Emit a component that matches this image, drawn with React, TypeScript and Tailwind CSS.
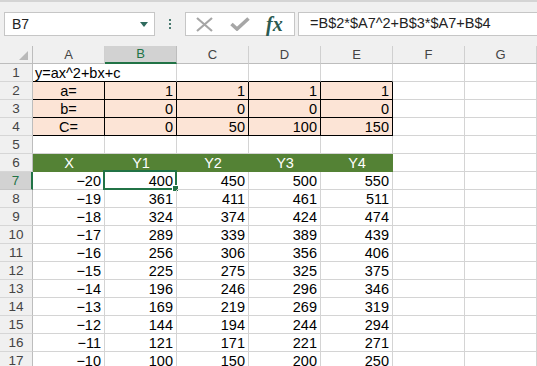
import React from 'react';

const cols = ['A', 'B', 'C', 'D', 'E', 'F', 'G'];

// x values -20..-10 with y = x^2 + c for c = 0, 50, 100, 150
const dataRows = Array.from({ length: 11 }, (_, i) => {
  const x = -20 + i;
  return [x, x * x, x * x + 50, x * x + 100, x * x + 150];
});

const fmt = (n: number) => (n < 0 ? `\u2212${Math.abs(n)}` : `${n}`);

const RowHead = ({ n, active }: { n: number; active?: boolean }) => (
  <div
    className={`h-[18px] border-b border-r flex items-center justify-center pt-[2px] text-[13.5px] ${
      active
        ? 'bg-[#d2d2d2] text-[#217346] border-b-[#c6c6c6] border-r-2 border-r-[#217346]'
        : 'bg-[#f0f0f0] text-[#444] border-b-[#d6d6d6] border-r-[#bdbdbd]'
    }`}
  >
    {n}
  </div>
);

const Cell = ({
  children,
  className = '',
}: {
  children?: React.ReactNode;
  className?: string;
}) => (
  <div className={`relative h-[18px] flex items-center pt-[2px] whitespace-nowrap text-[14.5px] ${className}`}>
    {children}
  </div>
);

export default function App() {
  return (
    <div className="w-[537px] h-[366px] overflow-hidden bg-white font-['Liberation_Sans',Arial,sans-serif] text-black">
      {/* formula bar */}
      <div className="h-[46px] bg-[#f0f0f0] border-t-2 border-[#d4d4d4] flex items-start pt-[10px]">
        <div className="ml-[4px] w-[151px] h-[24px] border border-[#c6c6c6] bg-white flex items-center justify-between pl-[7px] pr-[6px] text-[14px] text-[#222]">
          <span>B7</span>
          <svg width="8" height="5" viewBox="0 0 8 5">
            <polygon points="0,0 8,0 4,5" fill="#2f6b5e" />
          </svg>
        </div>
        <div className="w-[30px] h-[24px] flex flex-col items-center justify-center gap-[2px]">
          <span className="w-[2px] h-[2px] bg-[#4a7a70]" />
          <span className="w-[2px] h-[2px] bg-[#4a7a70]" />
          <span className="w-[2px] h-[2px] bg-[#4a7a70]" />
        </div>
        <div className="w-[110px] h-[24px] border border-[#c6c6c6] bg-white flex items-center pl-[10px]">
          <svg width="17" height="15" viewBox="0 0 17 15">
            <path d="M1 1 L16 14 M16 1 L1 14" stroke="#a6a6a6" strokeWidth="2.2" fill="none" />
          </svg>
          <svg width="20" height="14" viewBox="0 0 20 14" className="ml-[17px]">
            <path d="M1.5 7 L7 12 L18.5 1.5" stroke="#a6a6a6" strokeWidth="3.6" fill="none" />
          </svg>
          <span className="ml-[16px] italic font-semibold font-['Liberation_Serif',serif] text-[20px] leading-none text-[#2b5a50]">
            fx
          </span>
        </div>
        <div className="ml-[3px] flex-1 h-[24px] border border-r-0 border-[#c6c6c6] bg-white flex items-center pl-[11px] text-[14.5px] text-[#222]">
          =B$2*$A7^2+B$3*$A7+B$4
        </div>
      </div>

      {/* sheet */}
      <div className="grid grid-cols-[33px_repeat(7,72px)]">
        {/* column headers */}
        <div className="relative h-[18px] bg-[#f0f0f0] border-r border-b border-[#bdbdbd]">
          <svg width="9" height="9" viewBox="0 0 9 9" className="absolute right-[4px] bottom-[3px]">
            <polygon points="9,0 9,9 0,9" fill="#b9b9b9" />
          </svg>
        </div>
        {cols.map((c) => (
          <div
            key={c}
            className={`h-[18px] flex items-center justify-center text-[13px] border-r ${
              c === 'B'
                ? 'bg-[#d2d2d2] text-[#217346] border-r-[#bdbdbd] border-b-2 border-b-[#217346]'
                : 'bg-[#f0f0f0] text-[#444] border-r-[#d0d0d0] border-b border-b-[#bdbdbd]'
            }`}
          >
            {c}
          </div>
        ))}

        {/* row 1 */}
        <RowHead n={1} />
        <Cell className="pl-[2px] border-b border-black z-10">y=ax^2+bx+c</Cell>
        <Cell className="border-b border-r border-b-black border-r-[#d4d4d4]" />
        <Cell className="border-b border-r border-b-black border-r-[#d4d4d4]" />
        <Cell className="border-b border-r border-b-black border-r-[#d4d4d4]" />
        <Cell className="border-b border-r border-b-black border-r-[#d4d4d4]" />
        <Cell className="border-b border-r border-[#d4d4d4]" />
        <Cell className="border-b border-r border-[#d4d4d4]" />

        {/* rows 2-4 : coefficients */}
        {[
          ['a=', 1, 1, 1, 1],
          ['b=', 0, 0, 0, 0],
          ['C=', 0, 50, 100, 150],
        ].map((r, i) => (
          <React.Fragment key={i}>
            <RowHead n={i + 2} />
            <Cell className="justify-center bg-[#fce4d6] border-r border-b border-black">{r[0]}</Cell>
            {r.slice(1).map((v, j) => (
              <Cell key={j} className="justify-end pr-[3px] bg-[#fce4d6] border-r border-b border-black">
                {v}
              </Cell>
            ))}
            <Cell className="border-b border-r border-[#d4d4d4]" />
            <Cell className="border-b border-r border-[#d4d4d4]" />
          </React.Fragment>
        ))}

        {/* row 5 */}
        <RowHead n={5} />
        {cols.map((c) => (
          <Cell key={c} className="border-b border-r border-[#d4d4d4]" />
        ))}

        {/* row 6 : table header */}
        <RowHead n={6} />
        {['X', 'Y1', 'Y2', 'Y3', 'Y4'].map((h) => (
          <Cell key={h} className="justify-center bg-[#548235] text-white border-b border-[#548235]">
            {h}
          </Cell>
        ))}
        <Cell className="border-b border-r border-[#d4d4d4]" />
        <Cell className="border-b border-r border-[#d4d4d4]" />

        {/* rows 7-17 : data */}
        {dataRows.map((r, i) => (
          <React.Fragment key={i}>
            <RowHead n={i + 7} active={i === 0} />
            {r.map((v, j) => (
              <Cell key={j} className="justify-end pr-[3px] border-b border-r border-[#d4d4d4]">
                {fmt(v)}
                {i === 0 && j === 1 && (
                  <>
                    <span className="absolute -left-[2px] -top-[2px] -right-px -bottom-px border-2 border-[#217346]" />
                    <span className="absolute -right-[3px] -bottom-[3px] w-[7px] h-[7px] bg-[#217346] border border-white" />
                  </>
                )}
              </Cell>
            ))}
            <Cell className="border-b border-r border-[#d4d4d4]" />
            <Cell className="border-b border-r border-[#d4d4d4]" />
          </React.Fragment>
        ))}
      </div>
    </div>
  );
}
